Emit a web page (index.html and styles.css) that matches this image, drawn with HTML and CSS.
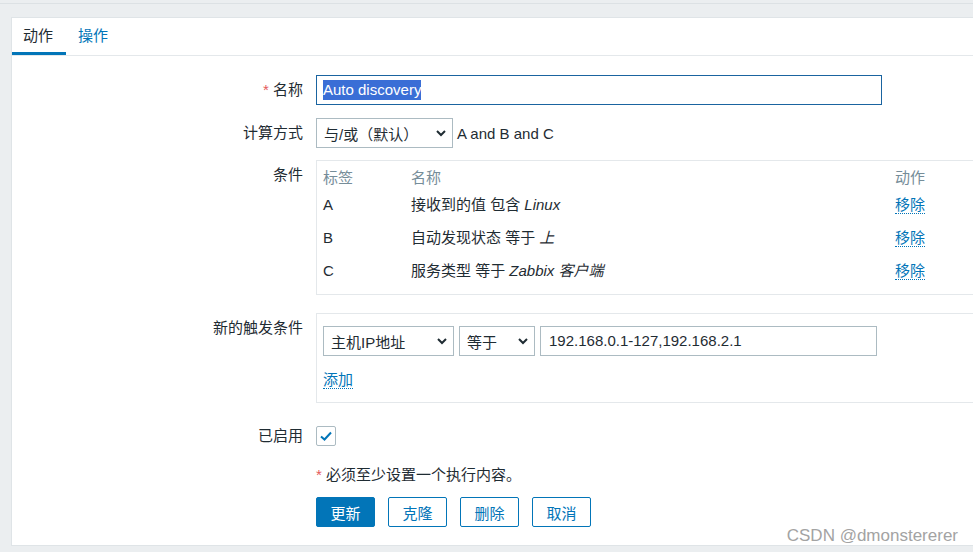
FILE: index.html
```html
<!DOCTYPE html>
<html lang="zh-CN">
<head>
<meta charset="utf-8">
<title>Action</title>
<link rel="stylesheet" href="styles.css">
</head>
<body>
<div class="topbar"></div>
<div class="panel">
  <div class="tabs">
    <span class="tab active">动作</span>
    <span class="tab link">操作</span>
  </div>
  <div class="form">
    <div class="row">
      <div class="lbl"><span class="req">*</span> 名称</div>
      <div class="field">
        <div class="input focus name"><span class="selected">Auto discovery</span></div>
      </div>
    </div>
    <div class="row gap13">
      <div class="lbl">计算方式</div>
      <div class="field inline">
        <div class="select calc"><span>与/或（默认）</span><svg class="chev" width="10" height="7" viewBox="0 0 10 7"><polyline points="1,1 5,5 9,1" fill="none" stroke="#1f2c33" stroke-width="2"/></svg></div>
        <span class="expr">A and B and C</span>
      </div>
    </div>
    <div class="row gap12">
      <div class="lbl">条件</div>
      <div class="field">
        <div class="box conds">
          <div class="trow head"><span>标签</span><span>名称</span><span>动作</span></div>
          <div class="trow"><span>A</span><span>接收到的值 包含 <i>Linux</i></span><span><a class="dlink">移除</a></span></div>
          <div class="trow"><span>B</span><span>自动发现状态 等于 <i>上</i></span><span><a class="dlink">移除</a></span></div>
          <div class="trow"><span>C</span><span>服务类型 等于 <i>Zabbix 客户端</i></span><span><a class="dlink">移除</a></span></div>
        </div>
      </div>
    </div>
    <div class="row gap18">
      <div class="lbl">新的触发条件</div>
      <div class="field">
        <div class="box newcond">
          <div class="inline fields">
            <div class="select host"><span>主机IP地址</span><svg class="chev" width="10" height="7" viewBox="0 0 10 7"><polyline points="1,1 5,5 9,1" fill="none" stroke="#1f2c33" stroke-width="2"/></svg></div>
            <div class="select op"><span>等于</span><svg class="chev" width="10" height="7" viewBox="0 0 10 7"><polyline points="1,1 5,5 9,1" fill="none" stroke="#1f2c33" stroke-width="2"/></svg></div>
            <div class="input ip">192.168.0.1-127,192.168.2.1</div>
          </div>
          <div class="addline"><a class="dlink">添加</a></div>
        </div>
      </div>
    </div>
    <div class="row gap18">
      <div class="lbl">已启用</div>
      <div class="field">
        <div class="checkbox"><svg width="18" height="18" viewBox="0 0 18 18"><polyline points="4,9.5 7.5,12.5 14,5.5" fill="none" stroke="#0275b8" stroke-width="2"/></svg></div>
      </div>
    </div>
    <div class="row msgrow">
      <div></div>
      <div class="field msg"><span class="req">*</span> 必须至少设置一个执行内容。</div>
    </div>
    <div class="row btnrow">
      <div></div>
      <div class="field buttons">
        <button class="btn primary">更新</button>
        <button class="btn">克隆</button>
        <button class="btn">删除</button>
        <button class="btn">取消</button>
      </div>
    </div>
  </div>
</div>
<div class="watermark">CSDN @dmonstererer</div>
</body>
</html>
```

FILE: styles.css
```css
* { box-sizing: border-box; }
html, body { margin: 0; height: 100%; }
body {
  background: #ebeef0;
  font-family: "Liberation Sans", Arial, "Noto Sans CJK SC", sans-serif;
  font-size: 15px;
  color: #1f2c33;
  overflow: hidden;
  position: relative;
}
.topbar { height: 4px; border-bottom: 1px solid #dce1e4; }
.panel {
  margin: 13px -60px 0 11px;
  background: #fff;
  border: 1px solid #dfe4e7;
  padding-bottom: 18px;
}
.tabs { display: flex; height: 38px; border-bottom: 1px solid #e4e8eb; }
.tab {
  padding: 2px 13px 0 11px;
  line-height: 32px;
  border-bottom: 3px solid transparent;
}
.tab.active { border-bottom-color: #0275b8; color: #1f2c33; }
.tab.link { color: #0275b8; padding-left: 12px; }
.form { padding-top: 19px; }
.row {
  display: grid;
  grid-template-columns: 291px 1fr;
  column-gap: 13px;
}
.gap13 { margin-top: 13px; }
.gap12 { margin-top: 12px; }
.gap18 { margin-top: 18px; }
.lbl { text-align: right; line-height: 30px; white-space: nowrap; }
.req { color: #e45959; }
.inline { display: flex; align-items: center; }
.input {
  height: 30px;
  border: 1px solid #acbbc2;
  padding: 0 7px;
  line-height: 28px;
  white-space: nowrap;
  background: #fff;
}
.input.focus { border-color: #1a64a0; }
.name { width: 566px; display: flex; align-items: center; padding-left: 6px; }
.selected { background: #3a6ed6; color: #fff; line-height: 20px; }
.select {
  height: 30px;
  border: 1px solid #acbbc2;
  padding: 0 6px 0 7px;
  display: flex;
  align-items: center;
  justify-content: space-between;
  white-space: nowrap;
  background: #fff;
}
.calc { width: 137px; }
.expr { margin-left: 4px; }
.box {
  border: 1px solid #e4e8eb;
  width: 720px;
}
.conds { padding: 7px 6px 7px; }
.trow {
  display: grid;
  grid-template-columns: 88px 484px 1fr;
  height: 33px;
  padding-top: 7px;
  line-height: 20px;
}
.trow.head { height: 20px; padding-top: 0; color: #768d99; }
.dlink {
  display: inline-block;
  color: #0275b8;
  line-height: 17px;
  border-bottom: 1px dotted #0275b8;
  cursor: pointer;
}
.newcond { padding: 12px 6px 12px; }
.fields { gap: 5px; }
.host { width: 131px; }
.op { width: 76px; }
.ip { width: 337px; padding-left: 8px; }
.addline { margin-top: 14px; line-height: 20px; }
.checkbox {
  width: 20px;
  height: 20px;
  margin-top: 5px;
  border: 1px solid #acbbc2;
  border-radius: 2px;
  display: flex;
  align-items: center;
  justify-content: center;
}
.msgrow { margin-top: 14px; }
.msg { line-height: 20px; }
.btnrow { margin-top: 12px; }
.buttons { display: flex; gap: 13px; }
.btn {
  width: 59px;
  height: 30px;
  padding: 0;
  font: inherit;
  font-size: 15px;
  color: #0275b8;
  background: #fff;
  border: 1px solid #0275b8;
  border-radius: 2px;
}
.btn.primary { background: #0275b8; color: #fff; }
.watermark {
  position: absolute;
  right: 15px;
  top: 525px;
  font-size: 17px;
  line-height: 22px;
  color: #a3a3a3;
  white-space: nowrap;
}
```
